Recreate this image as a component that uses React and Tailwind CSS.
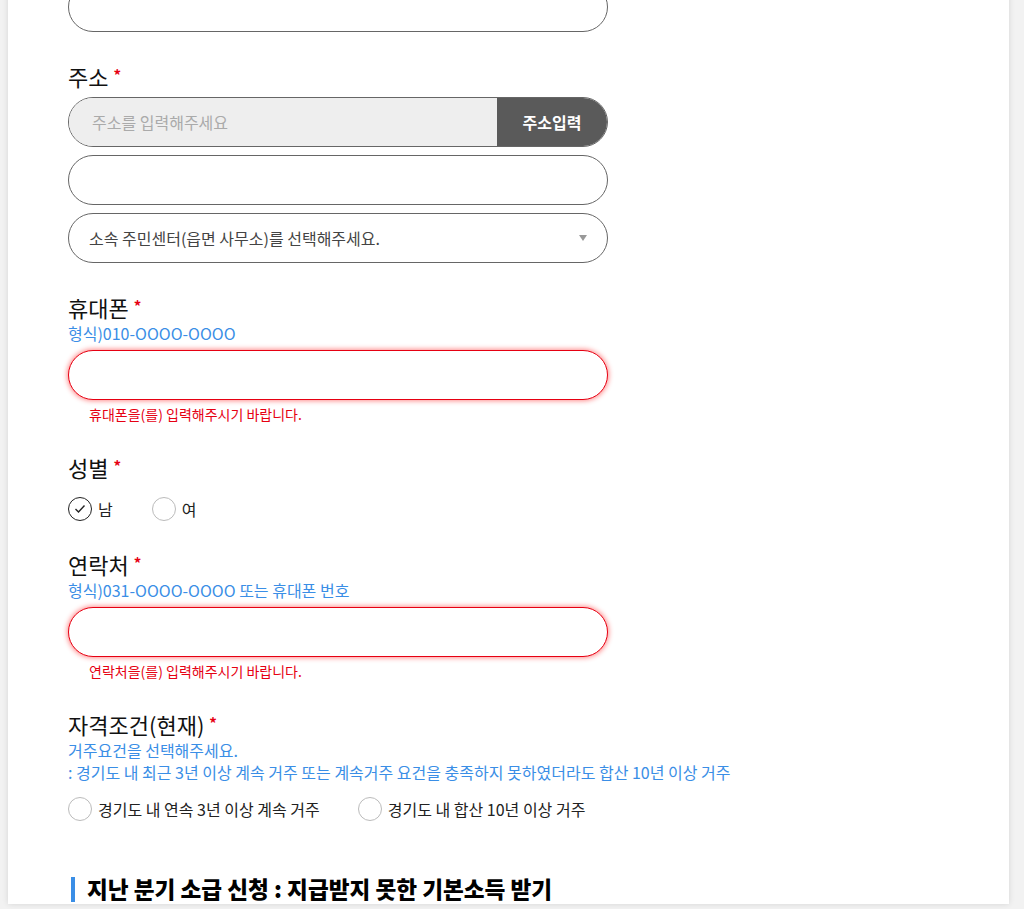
const font = { fontFamily: '"Noto Sans CJK KR", "Noto Sans", sans-serif' };

function Star() {
  return <span className="ml-[5px] align-top text-[15px] font-bold leading-[20px] text-[#e60012]">*</span>;
}

function Label({ children, mb = "mb-[4px]", h = "h-[28px]" }) {
  return (
    <div className={`text-[22px] leading-[22px] text-[#111] ${h} ${mb}`}>
      {children}
      <Star />
    </div>
  );
}

function Hint({ children }) {
  return <p className="text-[16px] leading-[22px] text-[#3a8ee6]">{children}</p>;
}

function ErrorInput({ message }) {
  return (
    <>
      <div className="h-[50px] w-[540px] rounded-full border border-[#e60012] bg-white shadow-[0_0_5px_1px_rgba(255,0,0,0.45)]" />
      <p className="mt-[5px] pl-[21px] text-[14px] leading-[18px] text-[#e60012]">{message}</p>
    </>
  );
}

function Radio({ label, checked, className = "" }) {
  return (
    <label className={`flex items-center gap-[6px] text-[16px] text-[#222] ${className}`}>
      <span
        className={`flex h-[24px] w-[24px] items-center justify-center rounded-full border ${
          checked ? "border-[#222]" : "border-[#bbb]"
        }`}
      >
        {checked && (
          <svg width="12" height="10" viewBox="0 0 12 10" fill="none">
            <path d="M1.5 5 L4.5 8 L10.5 1.5" stroke="#222" strokeWidth="1.4" />
          </svg>
        )}
      </span>
      {label}
    </label>
  );
}

export default function App() {
  return (
    <div className="min-h-[909px] overflow-hidden bg-[#f2f2f2]" style={font}>
      <div className="ml-[8px] min-h-[909px] w-[1001px] bg-white pl-[60px] shadow-[0_0_6px_rgba(0,0,0,0.12)]">
        <div className="-mt-[18px] h-[50px] w-[540px] rounded-full border border-[#666]" />

        <div className="mt-[33px]">
          <Label>주소</Label>
          <div className="flex h-[50px] w-[540px] overflow-hidden rounded-full border border-[#666]">
            <div className="flex flex-1 items-center bg-[#eeeeee] pl-[23px] text-[16px] text-[#aaa]">
              주소를 입력해주세요
            </div>
            <button className="w-[110px] bg-[#5a5a5a] text-[16px] font-bold text-white">주소입력</button>
          </div>
          <div className="mt-[8px] h-[50px] w-[540px] rounded-full border border-[#666]" />
          <div className="mt-[8px] flex h-[50px] w-[540px] items-center justify-between rounded-full border border-[#666] pl-[20px] pr-[20px] text-[16px] text-[#444]">
            <span>소속 주민센터(읍면 사무소)를 선택해주세요.</span>
            <svg width="8" height="6" viewBox="0 0 8 6">
              <path d="M0 0 H8 L4 6 Z" fill="#999" />
            </svg>
          </div>
        </div>

        <div className="mt-[33px]">
          <Label mb="" h="h-[26px]">휴대폰</Label>
          <Hint>형식)010-OOOO-OOOO</Hint>
          <div className="mt-[6px]">
            <ErrorInput message="휴대폰을(를) 입력해주시기 바랍니다." />
          </div>
        </div>

        <div className="mt-[33px]">
          <Label mb="mb-[13px]">성별</Label>
          <div className="flex items-center">
            <Radio label="남" checked />
            <Radio label="여" className="ml-[39px]" />
          </div>
        </div>

        <div className="mt-[32px]">
          <Label mb="" h="h-[26px]">연락처</Label>
          <Hint>형식)031-OOOO-OOOO 또는 휴대폰 번호</Hint>
          <div className="mt-[6px]">
            <ErrorInput message="연락처을(를) 입력해주시기 바랍니다." />
          </div>
        </div>

        <div className="mt-[33px]">
          <Label mb="" h="h-[26px]">자격조건(현재)</Label>
          <Hint>거주요건을 선택해주세요.</Hint>
          <Hint>: 경기도 내 최근 3년 이상 계속 거주 또는 계속거주 요건을 충족하지 못하였더라도 합산 10년 이상 거주</Hint>
          <div className="mt-[14px] flex items-center">
            <Radio label="경기도 내 연속 3년 이상 계속 거주" />
            <Radio label="경기도 내 합산 10년 이상 거주" className="ml-[38px]" />
          </div>
        </div>

        <div className="mt-[53px] flex items-center">
          <span className="ml-[3px] h-[25px] w-[4px] bg-[#3a8ee6]" />
          <h2 className="ml-[12px] text-[22.6px] font-extrabold leading-[30px] text-black">
            지난 분기 소급 신청 : 지급받지 못한 기본소득 받기
          </h2>
        </div>
      </div>
    </div>
  );
}
